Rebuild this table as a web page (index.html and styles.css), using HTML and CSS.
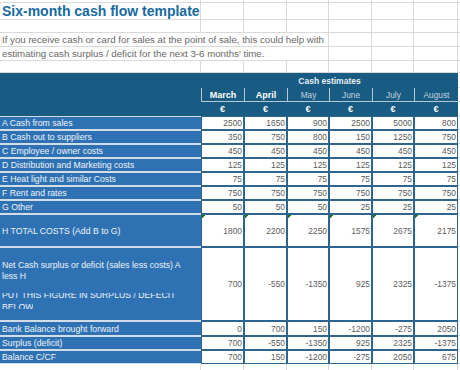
FILE: index.html
```html
<!DOCTYPE html>
<html>
<head>
<meta charset="utf-8">
<link rel="stylesheet" href="styles.css">
</head>
<body>
<div class="sheet">
  <div class="g"></div><div class="g"></div><div class="g"></div><div class="g"></div><div class="g"></div><div class="g"></div><div class="g"></div><div class="g"></div>

  <div class="g title">Six-month cash flow template</div><div class="g"></div><div class="g"></div><div class="g"></div><div class="g"></div><div class="g"></div><div class="g"></div><div class="g"></div>

  <div class="g"></div><div class="g"></div><div class="g"></div><div class="g"></div><div class="g"></div><div class="g"></div><div class="g"></div><div class="g"></div>

  <div class="g intro">If you receive cash or card for sales at the point of sale, this could help with</div><div class="g"></div><div class="g"></div><div class="g"></div><div class="g"></div>
  <div class="g intro">estimating cash surplus / deficit for the next 3-6 months' time.</div><div class="g"></div><div class="g"></div><div class="g"></div><div class="g"></div>

  <div class="g"></div><div class="g"></div><div class="g"></div><div class="g"></div><div class="g"></div><div class="g"></div><div class="g"></div><div class="g"></div>

  <div class="hd-left"></div><div class="hd-top">Cash estimates</div><div class="g"></div>
  <div class="mo b">March</div><div class="mo b">April</div><div class="mo">May</div><div class="mo">June</div><div class="mo">July</div><div class="mo">August</div><div class="g"></div>
  <div class="eu">€</div><div class="eu">€</div><div class="eu">€</div><div class="eu">€</div><div class="eu">€</div><div class="eu">€</div><div class="g"></div>

  <div class="lb">A Cash from sales</div><div class="v">2500</div><div class="v">1650</div><div class="v">900</div><div class="v">2500</div><div class="v">5000</div><div class="v">800</div><div class="g"></div>
  <div class="lb">B Cash out to suppliers</div><div class="v">350</div><div class="v">750</div><div class="v">800</div><div class="v">150</div><div class="v">1250</div><div class="v">750</div><div class="g"></div>
  <div class="lb">C Employee / owner costs</div><div class="v">450</div><div class="v">450</div><div class="v">450</div><div class="v">450</div><div class="v">450</div><div class="v">450</div><div class="g"></div>
  <div class="lb">D Distribution and Marketing costs</div><div class="v">125</div><div class="v">125</div><div class="v">125</div><div class="v">125</div><div class="v">125</div><div class="v">125</div><div class="g"></div>
  <div class="lb">E Heat light and similar Costs</div><div class="v">75</div><div class="v">75</div><div class="v">75</div><div class="v">75</div><div class="v">75</div><div class="v">75</div><div class="g"></div>
  <div class="lb">F Rent and rates</div><div class="v">750</div><div class="v">750</div><div class="v">750</div><div class="v">750</div><div class="v">750</div><div class="v">750</div><div class="g"></div>
  <div class="lb">G Other</div><div class="v">50</div><div class="v">50</div><div class="v">50</div><div class="v">25</div><div class="v">25</div><div class="v">25</div><div class="g"></div>
  <div class="lb">H TOTAL COSTS (Add B to G)</div><div class="v tri">1800</div><div class="v tri">2200</div><div class="v tri">2250</div><div class="v tri">1575</div><div class="v tri">2675</div><div class="v tri">2175</div><div class="g"></div>
  <div class="lb net">
    <p class="np">Net Cash surplus or deficit (sales less costs) A<br>less H</p>
    <span class="cut-top">PUT THIS FIGURE IN SURPLUS / DEFECIT</span>
    <span class="cut-bottom">BELOW</span>
  </div><div class="v">700</div><div class="v">-550</div><div class="v">-1350</div><div class="v">925</div><div class="v">2325</div><div class="v">-1375</div><div class="g"></div>
  <div class="lb">Bank Balance brought forward</div><div class="v">0</div><div class="v">700</div><div class="v">150</div><div class="v">-1200</div><div class="v">-275</div><div class="v">2050</div><div class="g"></div>
  <div class="lb">Surplus (deficit)</div><div class="v">700</div><div class="v">-550</div><div class="v">-1350</div><div class="v">925</div><div class="v">2325</div><div class="v">-1375</div><div class="g"></div>
  <div class="lb">Balance C/CF</div><div class="v">700</div><div class="v">150</div><div class="v">-1200</div><div class="v">-275</div><div class="v">2050</div><div class="v">675</div><div class="g"></div>

  <div class="g"></div><div class="g"></div><div class="g"></div><div class="g"></div><div class="g"></div><div class="g"></div><div class="g"></div><div class="g"></div>
</div>
</body>
</html>
```
FILE: styles.css
```css
html, body {
  margin: 0;
  padding: 0;
  background: #ffffff;
  overflow: hidden;
}

.sheet {
  display: grid;
  grid-template-columns: 201px 43px 43px 42px 43px 42px 44px 40px;
  grid-template-rows: 3px 17px 13px 14px 14px 12px 15px 14px 14px repeat(7, 14px) 33px 74px 15px 14px 14px 14px;
  font-family: "Liberation Sans", Arial, sans-serif;
  width: 460px;
  overflow: hidden;
}

.sheet > div {
  box-sizing: border-box;
  min-width: 0;
}

.g {
  border-right: 1px solid #d9d9d9;
  border-bottom: 1px solid #d9d9d9;
}

.title {
  font-size: 14px;
  font-weight: bold;
  color: #176a9f;
  line-height: 17px;
  padding-left: 2px;
  white-space: nowrap;
}

.intro {
  grid-column: span 4;
  font-size: 9.7px;
  color: #686868;
  line-height: 13px;
  padding-left: 2px;
  white-space: nowrap;
}

.hd-left {
  grid-row: span 3;
  background: #185c84;
}

.hd-top {
  grid-column: span 6;
  background: #185c84;
  color: #e6edf4;
  font-weight: bold;
  font-size: 8.5px;
  display: flex;
  align-items: center;
  justify-content: center;
}

.mo {
  background: #185c84;
  border-left: 1px solid #b6c8d8;
  border-bottom: 1px solid #b6c8d8;
  color: #c3d1de;
  font-size: 8.3px;
  display: flex;
  align-items: center;
  justify-content: center;
}

.mo.b {
  color: #ffffff;
  font-weight: bold;
  font-size: 9px;
}

.eu {
  background: #185c84;
  color: #ffffff;
  font-weight: bold;
  font-size: 9px;
  display: flex;
  align-items: center;
  justify-content: center;
}

.lb {
  background: #2f72b3;
  color: #eef3f9;
  font-size: 8.7px;
  padding-left: 2px;
  border-top: 1px solid #d3dde8;
  border-bottom: 1px solid #d3dde8;
  display: flex;
  align-items: center;
  white-space: nowrap;
}

.lb.net {
  flex-direction: column;
  align-items: flex-start;
  justify-content: center;
}

.np {
  margin: 0;
  line-height: 11px;
}

.cut-top {
  display: block;
  margin-top: 11px;
  height: 7px;
  line-height: 5px;
  overflow: hidden;
}

.cut-bottom {
  display: block;
  margin-top: 3px;
  height: 6px;
  line-height: 9px;
  overflow: hidden;
}

.v {
  background: #ffffff;
  border: 1px solid #2c6690;
  color: #5c5c5c;
  font-size: 8.4px;
  display: flex;
  align-items: center;
  justify-content: flex-end;
  padding-right: 1px;
}

.tri {
  background-image: linear-gradient(135deg, #1f7a1f 50%, transparent 50%);
  background-size: 4px 4px;
  background-repeat: no-repeat;
}
```
